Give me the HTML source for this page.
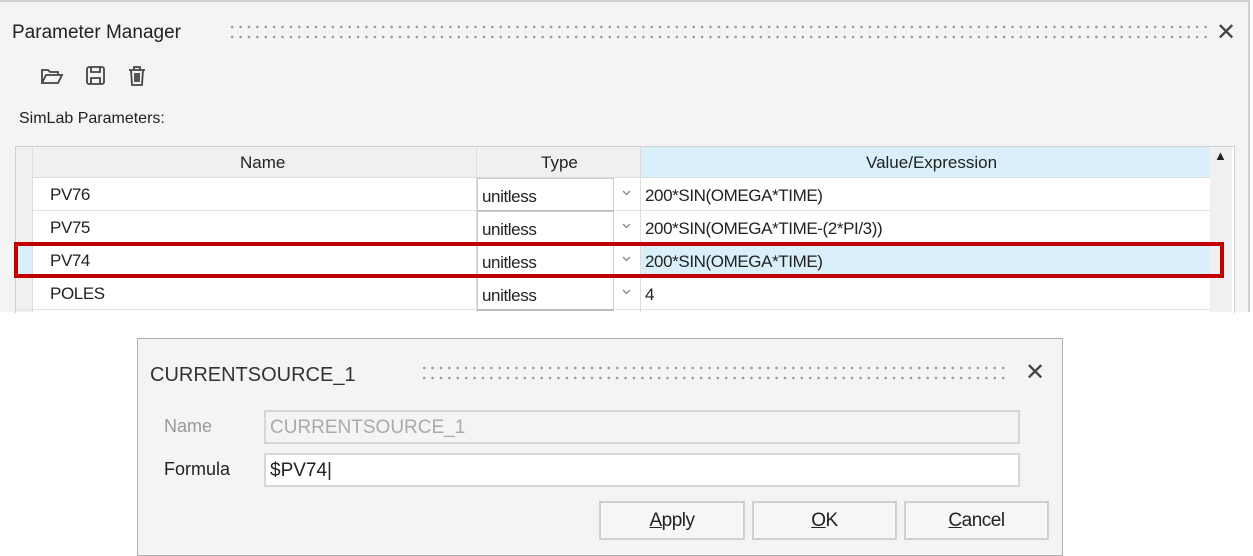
<!DOCTYPE html>
<html><head><style>
body{margin:0;width:1253px;height:556px;background:#fff;position:relative;overflow:hidden;font-family:"Liberation Sans",sans-serif;color:#222}
.a{position:absolute}
.dots{position:absolute;height:20px;background-image:radial-gradient(circle,#999 1.1px,transparent 1.5px);background-size:8.4px 10px}
.cell{position:absolute;font-size:17px;line-height:33px;padding-left:5px;box-sizing:border-box;white-space:nowrap;letter-spacing:-0.4px}
.btn{position:absolute;top:501px;height:39px;border:2px solid #d0d0d0;box-sizing:border-box;background:#f6f6f6;font-size:19px;text-align:center;line-height:36px;letter-spacing:-0.5px}
</style></head><body>
<div class="a" style="left:0;top:0;width:1250px;height:312px;background:#f4f4f4;border-top:2px solid #d0d0d0;border-right:2px solid #d0d0d0;box-sizing:border-box"></div>
<div class="a" style="left:12px;top:22px;font-size:19px">Parameter Manager</div>
<div class="dots" style="left:228px;top:22px;width:980px"></div>
<div class="a" style="left:1216px;top:18px;font-size:24px;color:#444">✕</div>
<svg class="a" style="left:40px;top:64px" width="115" height="24" viewBox="0 0 115 24" fill="none" stroke="#444" stroke-width="1.8">
<path d="M2 19V6h6l2 2h8v3M2 19l4-8h16l-4 8z"/>
<rect x="47" y="3" width="17" height="17" rx="2"/><path d="M51 3v5h9V3M51 20v-6h9v6"/>
<path d="M89 6h16M94 6V3h6v3M91 6l1 15h10l1-15M95 9v9M97 9v9M99 9v9"/>
</svg>
<div class="a" style="left:19px;top:110px;font-size:16px">SimLab Parameters:</div>
<div class="a" style="left:15px;top:146px;width:1218px;height:166px;border:1px solid #cfcfcf;border-bottom:none;background:#fff"></div>
<div class="a" style="left:16px;top:147px;width:1194px;height:30px;background:#f0f0f0;border-bottom:1px solid #ddd"></div>
<div class="a" style="left:640px;top:147px;width:570px;height:30px;background:#d9eff9"></div>
<div class="a" style="left:1210px;top:147px;width:22px;height:165px;background:#f0f0f0"></div>
<div class="a" style="left:1214px;top:148px;font-size:13px">▲</div>
<div class="a" style="left:16px;top:147px;width:16px;height:165px;background:#f0f0f0;border-right:1px solid #ddd"></div>
<div class="a" style="left:16px;top:244px;width:16px;height:33px;background:#d9eff9"></div>
<div class="a" style="left:476px;top:147px;width:1px;height:165px;background:#ddd"></div>
<div class="a" style="left:640px;top:147px;width:1px;height:165px;background:#ddd"></div>
<div class="a" style="left:240px;top:153px;font-size:17px">Name</div>
<div class="a" style="left:541px;top:153px;font-size:17px">Type</div>
<div class="a" style="left:866px;top:153px;font-size:17px">Value/Expression</div>
<div class="a" style="left:641px;top:244px;width:569px;height:33px;background:#d9eff9"></div>
<div class="a" style="left:32px;top:210px;width:1178px;height:1px;background:#e2e2e2"></div>
<div class="a" style="left:32px;top:243px;width:1178px;height:1px;background:#e2e2e2"></div>
<div class="a" style="left:32px;top:276px;width:1178px;height:1px;background:#e2e2e2"></div>
<div class="a" style="left:16px;top:309px;width:1194px;height:1px;background:#e2e2e2"></div>
<div class="cell" style="left:45px;top:178px">PV76</div>
<div class="cell" style="left:45px;top:211px">PV75</div>
<div class="cell" style="left:45px;top:244px">PV74</div>
<div class="cell" style="left:45px;top:277px">POLES</div>
<div class="a" style="left:477px;top:178px;width:163px;height:134px">
<div class="a" style="left:0;top:0;width:135px;height:31px;border:1px solid #ccc;border-bottom:2px solid #bbb"></div>
<div class="a" style="left:0;top:33px;width:135px;height:31px;border:1px solid #ccc;border-bottom:2px solid #bbb"></div>
<div class="a" style="left:0;top:66px;width:135px;height:31px;border:1px solid #ccc;border-bottom:2px solid #bbb"></div>
<div class="a" style="left:0;top:99px;width:135px;height:31px;border:1px solid #ccc;border-bottom:2px solid #bbb"></div>
</div>
<div class="cell" style="left:477px;top:180px">unitless</div>
<div class="cell" style="left:477px;top:213px">unitless</div>
<div class="cell" style="left:477px;top:246px">unitless</div>
<div class="cell" style="left:477px;top:279px">unitless</div>
<svg class="a" style="left:620px;top:178px" width="14" height="132" fill="none" stroke="#888" stroke-width="1.3">
<path d="M3 13l3.5 3.5L10 13M3 46l3.5 3.5L10 46M3 79l3.5 3.5L10 79M3 112l3.5 3.5L10 112"/>
</svg>
<div class="cell" style="left:640px;top:179px">200*SIN(OMEGA*TIME)</div>
<div class="cell" style="left:640px;top:212px">200*SIN(OMEGA*TIME-(2*PI/3))</div>
<div class="cell" style="left:640px;top:245px">200*SIN(OMEGA*TIME)</div>
<div class="cell" style="left:640px;top:278px">4</div>
<div class="a" style="left:14px;top:242px;width:1210px;height:36px;border:4px solid #c00000;box-sizing:border-box"></div>
<div class="a" style="left:137px;top:338px;width:926px;height:218px;background:#f4f4f4;border:1px solid #b0b0b0;box-sizing:border-box"></div>
<div class="a" style="left:150px;top:364px;font-size:20px;color:#333">CURRENTSOURCE_1</div>
<div class="dots" style="left:420px;top:363px;width:590px"></div>
<div class="a" style="left:1025px;top:358px;font-size:24px;color:#444">✕</div>
<div class="a" style="left:164px;top:416px;font-size:18px;color:#999">Name</div>
<div class="a" style="left:264px;top:410px;width:756px;height:34px;border:2px solid #d6d6d6;box-sizing:border-box;font-size:19px;color:#aaa;padding:5px 0 0 4px">CURRENTSOURCE_1</div>
<div class="a" style="left:164px;top:459px;font-size:18px;color:#222">Formula</div>
<div class="a" style="left:264px;top:453px;width:756px;height:34px;border:2px solid #d6d6d6;box-sizing:border-box;background:#fff;font-size:19px;padding:5px 0 0 4px">$PV74|</div>
<div class="btn" style="left:599px;width:146px"><u>A</u>pply</div>
<div class="btn" style="left:752px;width:145px"><u>O</u>K</div>
<div class="btn" style="left:904px;width:145px"><u>C</u>ancel</div>
</body></html>
